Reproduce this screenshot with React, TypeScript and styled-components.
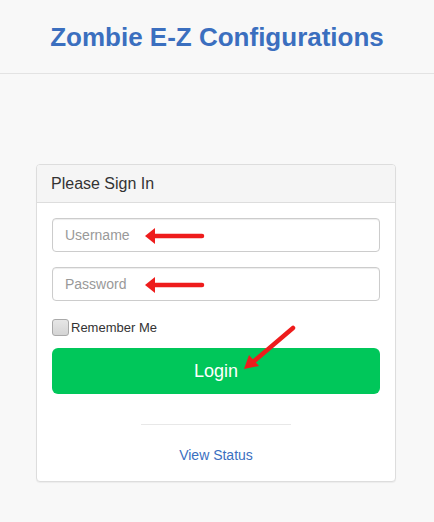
import React from "react";
import styled, { createGlobalStyle } from "styled-components";

const GlobalStyle = createGlobalStyle`
    * { box-sizing: border-box; }
    body {
        margin: 0;
        background: #f8f8f8;
        font-family: "Liberation Sans", Arial, Helvetica, sans-serif;
        color: #333;
    }
`;

const Header = styled.header`
    height: 74px;
    padding-top: 2px;
    border-bottom: 1px solid #e3e3e3;
    display: flex;
    justify-content: center;
    align-items: center;
`;

const Title = styled.h1`
    margin: 0;
    font-size: 26px;
    font-weight: bold;
    color: #3b6fbf;
`;

const Container = styled.div`
    padding: 90px 2px 40px 0;
    display: flex;
    justify-content: center;
`;

const Panel = styled.div`
    width: 360px;
    background: #fff;
    border: 1px solid #ddd;
    border-radius: 4px;
    box-shadow: 0 1px 1px rgba(0, 0, 0, 0.05);
`;

const PanelHeading = styled.div`
    height: 38px;
    padding: 0 14px;
    display: flex;
    align-items: center;
    background: #f5f5f5;
    border-bottom: 1px solid #ddd;
    border-radius: 3px 3px 0 0;
    font-size: 16px;
    color: #333;
`;

const PanelBody = styled.div`
    padding: 15px;
    display: flex;
    flex-direction: column;
`;

const Field = styled.div`
    position: relative;
    margin-bottom: 15px;
`;

const Input = styled.input`
    display: block;
    width: 100%;
    height: 34px;
    padding: 6px 12px;
    font-size: 14px;
    font-family: inherit;
    border: 1px solid #ccc;
    border-radius: 4px;
    box-shadow: inset 0 1px 1px rgba(0, 0, 0, 0.075);
    background: #fff;
    &::placeholder {
        color: #999;
    }
`;

const Arrow = styled.svg<{ $left: number; $top: number }>`
    position: absolute;
    left: ${(p) => p.$left}px;
    top: ${(p) => p.$top}px;
    pointer-events: none;
`;

const CheckRow = styled.label`
    display: flex;
    align-items: center;
    gap: 2px;
    margin-top: 3px;
    font-size: 13px;
    color: #333;
`;

const Box = styled.span`
    display: inline-block;
    width: 17px;
    height: 17px;
    border: 1px solid #a9a9a9;
    border-radius: 3px;
    background: linear-gradient(#e6e6e6, #d4d4d4);
`;

const LoginWrap = styled.div`
    position: relative;
    margin-top: 12px;
`;

const LoginButton = styled.button`
    display: block;
    width: 100%;
    height: 46px;
    border: none;
    border-radius: 6px;
    background: #00c75a;
    color: #fff;
    font-size: 18px;
    font-family: inherit;
`;

const Divider = styled.hr`
    width: 150px;
    margin: 30px auto 0;
    border: none;
    border-top: 1px solid #e8e8e8;
`;

const StatusLink = styled.a`
    margin: 22px 0 3px;
    text-align: center;
    font-size: 14px;
    color: #3b6fbf;
    text-decoration: none;
`;

function LeftArrow() {
    return (
        <Arrow $left={92} $top={8} width="62" height="20" viewBox="0 0 62 20">
            <path d="M10 10 H58" stroke="#ee1c1c" strokeWidth="4.5" strokeLinecap="round" />
            <path d="M1 10 L11 2 L11 18 Z" fill="#ee1c1c" />
        </Arrow>
    );
}

function App() {
    return (
        <>
            <GlobalStyle />
            <Header>
                <Title>Zombie E-Z Configurations</Title>
            </Header>
            <Container>
                <Panel>
                    <PanelHeading>Please Sign In</PanelHeading>
                    <PanelBody>
                        <Field>
                            <Input placeholder="Username" />
                            <LeftArrow />
                        </Field>
                        <Field>
                            <Input placeholder="Password" type="password" />
                            <LeftArrow />
                        </Field>
                        <CheckRow>
                            <Box />
                            Remember Me
                        </CheckRow>
                        <LoginWrap>
                            <LoginButton>Login</LoginButton>
                            <Arrow $left={189} $top={-24} width="60" height="50" viewBox="0 0 60 50">
                                <path d="M52 4 L12 38" stroke="#ee1c1c" strokeWidth="4.5" strokeLinecap="round" />
                                <path d="M3 45 L8 31 L18 42 Z" fill="#ee1c1c" />
                            </Arrow>
                        </LoginWrap>
                        <Divider />
                        <StatusLink href="#">View Status</StatusLink>
                    </PanelBody>
                </Panel>
            </Container>
        </>
    );
}

export default App;
